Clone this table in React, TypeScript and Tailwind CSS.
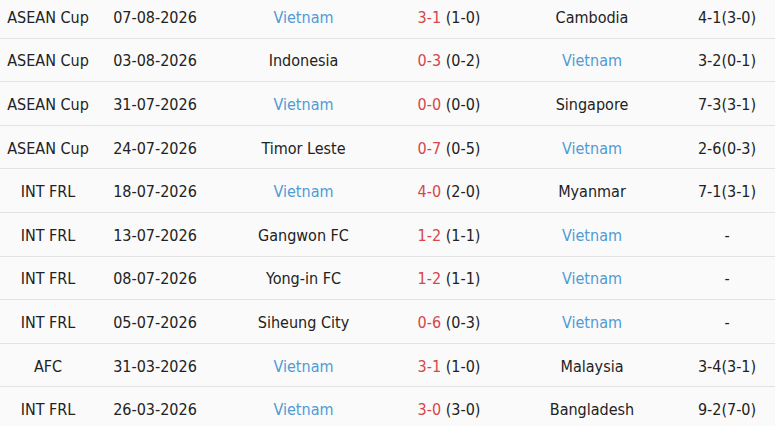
import React from "react";

type Row = {
  league: string;
  date: string;
  home: string;
  score: string;
  ht: string;
  away: string;
  hcp: string;
};

const rows: Row[] = [
  { league: "ASEAN Cup", date: "07-08-2026", home: "Vietnam", score: "3-1", ht: "(1-0)", away: "Cambodia", hcp: "4-1(3-0)" },
  { league: "ASEAN Cup", date: "03-08-2026", home: "Indonesia", score: "0-3", ht: "(0-2)", away: "Vietnam", hcp: "3-2(0-1)" },
  { league: "ASEAN Cup", date: "31-07-2026", home: "Vietnam", score: "0-0", ht: "(0-0)", away: "Singapore", hcp: "7-3(3-1)" },
  { league: "ASEAN Cup", date: "24-07-2026", home: "Timor Leste", score: "0-7", ht: "(0-5)", away: "Vietnam", hcp: "2-6(0-3)" },
  { league: "INT FRL", date: "18-07-2026", home: "Vietnam", score: "4-0", ht: "(2-0)", away: "Myanmar", hcp: "7-1(3-1)" },
  { league: "INT FRL", date: "13-07-2026", home: "Gangwon FC", score: "1-2", ht: "(1-1)", away: "Vietnam", hcp: "-" },
  { league: "INT FRL", date: "08-07-2026", home: "Yong-in FC", score: "1-2", ht: "(1-1)", away: "Vietnam", hcp: "-" },
  { league: "INT FRL", date: "05-07-2026", home: "Siheung City", score: "0-6", ht: "(0-3)", away: "Vietnam", hcp: "-" },
  { league: "AFC", date: "31-03-2026", home: "Vietnam", score: "3-1", ht: "(1-0)", away: "Malaysia", hcp: "3-4(3-1)" },
  { league: "INT FRL", date: "26-03-2026", home: "Vietnam", score: "3-0", ht: "(3-0)", away: "Bangladesh", hcp: "9-2(7-0)" },
];

const team = (name: string) =>
  name === "Vietnam" ? "text-[#4f9bd6]" : "text-[#222222]";

export default function App() {
  return (
    <div
      className="w-[775px] h-[426px] overflow-hidden bg-[#fafafa] text-[16px] text-[#222222]"
      style={{ fontFamily: '"DejaVu Sans Condensed", "DejaVu Sans", sans-serif' }}
    >
      <div className="-mt-[5px] flex flex-col">
        {rows.map((r, i) => (
          <div
            key={i}
            className="flex h-[43.6px] items-center border-b border-[#e3e3e3] pt-[3px] text-center"
          >
            <div className="w-[96px]">{r.league}</div>
            <div className="w-[118px]">{r.date}</div>
            <div className={`w-[179px] ${team(r.home)}`}>{r.home}</div>
            <div className="w-[112px]">
              <span className="text-[#d6464a]">{r.score}</span> {r.ht}
            </div>
            <div className={`w-[174px] ${team(r.away)}`}>{r.away}</div>
            <div className="w-[96px]">{r.hcp}</div>
          </div>
        ))}
      </div>
    </div>
  );
}
